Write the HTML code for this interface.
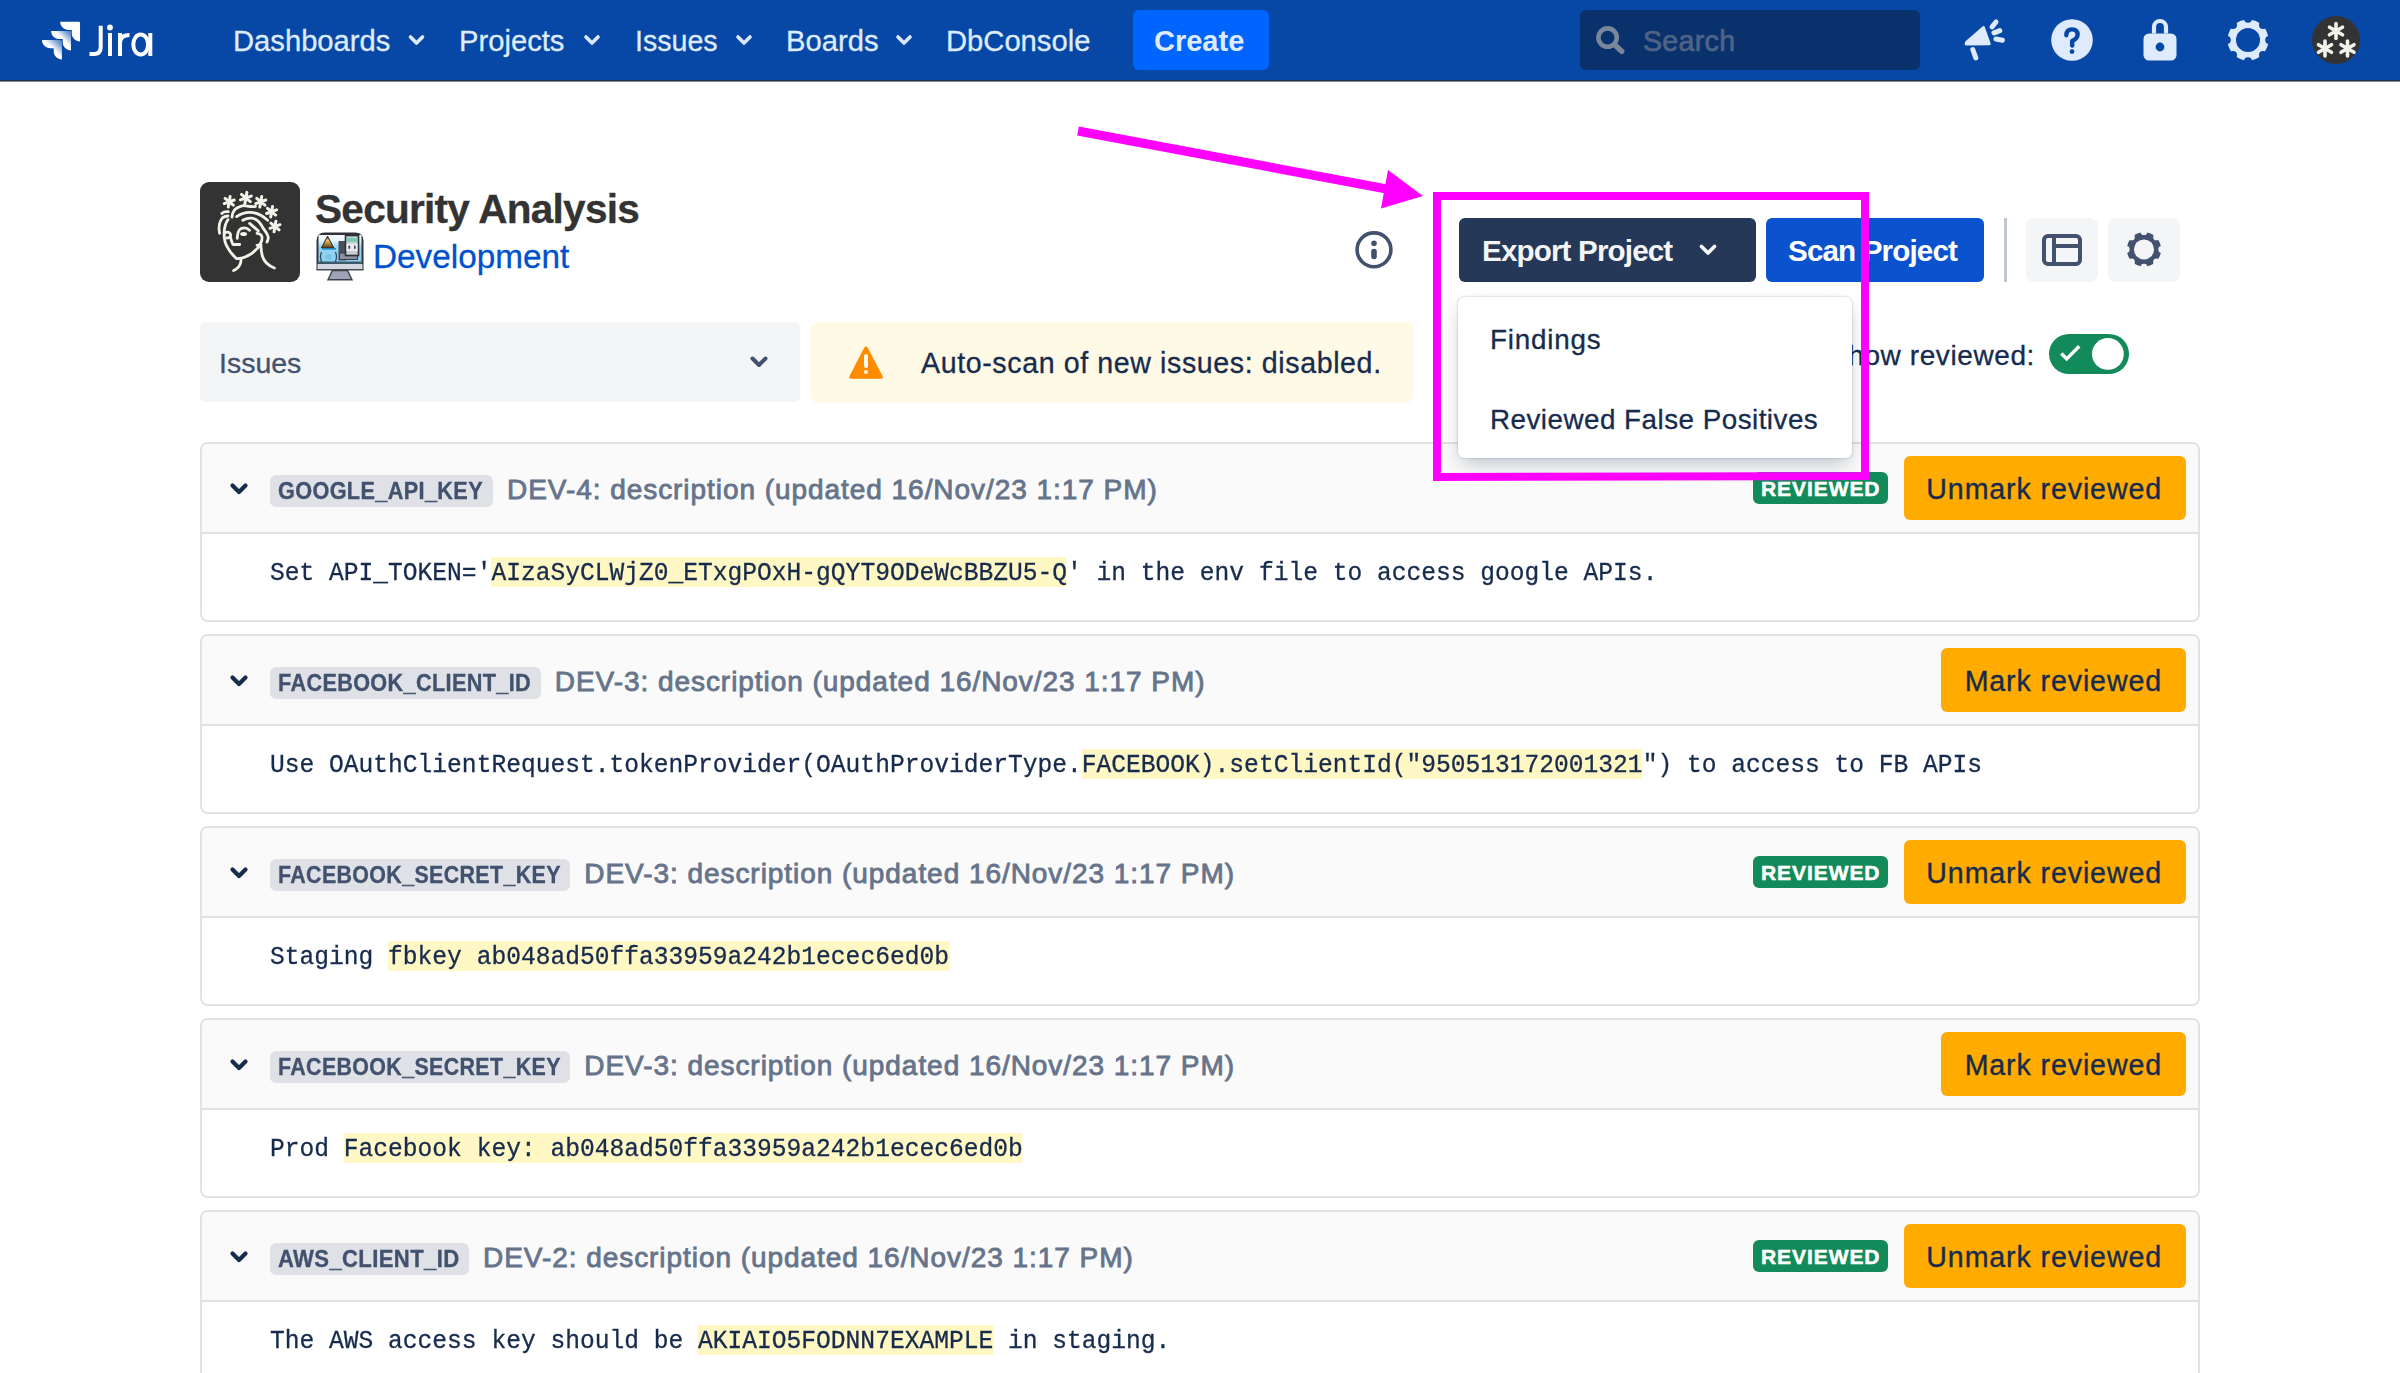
<!DOCTYPE html>
<html><head><meta charset="utf-8"><style>
*{box-sizing:border-box;margin:0;padding:0}
html,body{width:2400px;height:1373px;overflow:hidden;background:#fff;font-family:"Liberation Sans",sans-serif;-webkit-text-stroke-width:0.3px}
.a{position:absolute;white-space:pre}
svg{position:absolute;overflow:visible}
#hdr{position:absolute;left:0;top:0;width:2400px;height:80px;background:#0747A6}
#hdrline{position:absolute;left:0;top:80px;width:2400px;height:2px;background:linear-gradient(#23304a 50%,#7c8494 50%)}
.nav{color:#DEEBFF;font-size:29.2px;top:23px;line-height:36px}
.card{position:absolute;left:200px;width:2000px;height:180px;border:2px solid #E2E2E2;border-radius:8px;background:#fff;overflow:hidden}
.chd{position:absolute;left:0;top:0;width:100%;height:90px;background:#FAFAFA;border-bottom:2px solid #E2E2E2}
.rchev{left:27px;top:38px}
.tagrow{position:absolute;left:68px;top:29px;height:36px;white-space:pre;display:flex;align-items:center}
.tag{-webkit-text-stroke-width:0;display:inline-block;position:relative;height:32px;background:#DFE1E6;border-radius:6px}
.tag i{-webkit-text-stroke:0.35px #42526E;position:absolute;left:7.6px;top:0;line-height:32px;font-style:normal;color:#42526E;font-weight:700;font-size:24px;letter-spacing:0.4px;transform-origin:0 50%;white-space:pre}
.ttl{-webkit-text-stroke:0.85px #66748B;display:inline-block;position:relative;top:-1px;margin-left:14px;color:#66748B;font-size:28px;font-weight:400;letter-spacing:0.95px;line-height:36px}
.badge{position:absolute;right:310px;top:28px;height:32px;line-height:33px;padding:0 7.6px 0 7.6px;-webkit-text-stroke:0.5px #fff;background:#138A5A;color:#fff;font-weight:700;font-size:21px;letter-spacing:0.92px;border-radius:6px}
.obtn{position:absolute;right:12px;top:12px;height:64px;line-height:64px;padding:0 24px;background:#FFAB00;color:#172B4D;border-radius:6px;font-size:28.6px;letter-spacing:0.88px;white-space:pre;-webkit-text-stroke:0.35px #172B4D;padding-top:1px}
.code{position:absolute;left:68px;top:113px;height:34px;line-height:34px;font-family:"Liberation Mono",monospace;font-size:25.6px;color:#172B4D;white-space:pre;transform:scaleX(0.96097);transform-origin:0 0}
.hl{background:#FFF7C4;display:inline-block;line-height:26px;padding-top:4px}
.unm{padding-left:22.3px}

</style></head><body>
<div id="hdr"></div><div id="hdrline"></div>
<!-- jira logo -->
<svg width="2400" height="82" style="left:0;top:0">
 <defs>
  <linearGradient id="jg1" x1="98%" y1="0%" x2="58%" y2="40%"><stop offset="0.18" stop-color="#DEEBFF" stop-opacity="0.4"/><stop offset="1" stop-color="#fff"/></linearGradient>
  <linearGradient id="jg2" x1="100%" y1="0%" x2="55%" y2="45%"><stop offset="0.18" stop-color="#DEEBFF" stop-opacity="0.4"/><stop offset="1" stop-color="#fff"/></linearGradient>
 </defs>
 <g transform="translate(40,19.04) scale(1.33)">
  <path fill="#fff" d="M29,2H15.2c0,3.4,2.8,6.2,6.2,6.2h2.5v2.4c0,3.4,2.8,6.2,6.2,6.2V3C30.1,2.4,29.6,2,29,2z"/>
  <path fill="url(#jg1)" d="M22.2,8.9H8.4c0,3.4,2.8,6.2,6.2,6.2h2.5v2.4c0,3.4,2.8,6.2,6.2,6.2V9.9C23.3,9.3,22.8,8.9,22.2,8.9z"/>
  <path fill="url(#jg2)" d="M15.3,15.7H1.5c0,3.4,2.8,6.2,6.2,6.2h2.6v2.4c0,3.4,2.8,6.2,6.2,6.2V16.8C16.4,16.2,15.9,15.7,15.3,15.7z"/>
 </g>

 <!-- Jira wordmark -->
 <g fill="none" stroke="#fff" stroke-width="4">
  <path d="M100.7,25.7 V47 Q100.7,54 94,54 H89.5"/>
  <path d="M110,33 V56"/>
  <path d="M120,33 V56 M120,43 Q120,35 129.5,35"/>
  <ellipse cx="140.7" cy="44.5" rx="7.4" ry="10"/>
  <path d="M150.3,33 V56"/>
 </g>
 <circle cx="110" cy="27.5" r="2.9" fill="#fff"/>
 <!-- nav chevrons -->
 <g fill="none" stroke="#DEEBFF" stroke-width="3.6" stroke-linecap="round" stroke-linejoin="round">
  <path d="M410.5,37 L416.5,43 L422.5,37"/>
  <path d="M586,37 L592,43 L598,37"/>
  <path d="M738,37 L744,43 L750,37"/>
  <path d="M898,37 L904,43 L910,37"/>
 </g>
 <!-- megaphone -->
 <g fill="#DEEBFF">
  <path d="M1965.5,41.2 L1982.5,26.5 Q1984.2,25.2 1984.9,27.2 L1990.6,43.2 Q1991.2,45.2 1989.2,45.2 L1966.6,45.5 Q1963.3,45.2 1965.5,41.2Z"/>
 </g>
 <g fill="none" stroke="#DEEBFF" stroke-width="5" stroke-linecap="round">
  <path d="M1972.8,49.5 L1975.8,57.8"/>
  <path d="M1992,26.8 L1996,22"/>
  <path d="M1994,32.9 L1999.8,30.6"/>
  <path d="M1996,39 L2002.4,40.2"/>
 </g>
 <!-- help -->
 <circle cx="2072" cy="40" r="20.8" fill="#DEEBFF"/>
 <path d="M2066.3,35.2 Q2066.5,29.4 2072,29.4 Q2077.6,29.4 2077.6,34.8 Q2077.6,38.4 2072.2,41 L2072.2,45.5" fill="none" stroke="#0747A6" stroke-width="4.4" stroke-linecap="round" stroke-linejoin="round"/>
 <circle cx="2072" cy="51.6" r="2.4" fill="#0747A6"/>
 <!-- lock -->
 <path d="M2154,33.5 V27 A6,6 0 0 1 2166,27 V33.5" fill="none" stroke="#DEEBFF" stroke-width="4.2"/>
 <rect x="2143.5" y="33.5" width="33" height="27" rx="5.5" fill="#DEEBFF"/>
 <circle cx="2160" cy="47" r="4.4" fill="#0747A6"/>
 <!-- gear -->
 <mask id="gm1" maskUnits="userSpaceOnUse" x="2218" y="10" width="60" height="60"><rect x="2218" y="10" width="60" height="60" fill="#fff"/><circle cx="2269.20" cy="40.00" r="4.00" fill="#000"/><circle cx="2262.99" cy="25.01" r="4.00" fill="#000"/><circle cx="2248.00" cy="18.80" r="4.00" fill="#000"/><circle cx="2233.01" cy="25.01" r="4.00" fill="#000"/><circle cx="2226.80" cy="40.00" r="4.00" fill="#000"/><circle cx="2233.01" cy="54.99" r="4.00" fill="#000"/><circle cx="2248.00" cy="61.20" r="4.00" fill="#000"/><circle cx="2262.99" cy="54.99" r="4.00" fill="#000"/><circle cx="2248.00" cy="40.00" r="12.00" fill="#000"/></mask><circle cx="2248.00" cy="40.00" r="20.50" fill="#DEEBFF" mask="url(#gm1)"/>
 <!-- avatar -->
 <circle cx="2336" cy="40" r="24" fill="#333"/>
 <g stroke="#F3F2EA" stroke-width="3.6" stroke-linecap="round">
  <path d="M2336,23.5 V38.5 M2329.5,27.2 L2342.5,34.8 M2329.5,34.8 L2342.5,27.2"/>
  <path d="M2325,41 V56 M2318.5,44.7 L2331.5,52.3 M2318.5,52.3 L2331.5,44.7"/>
  <path d="M2347.5,41 V56 M2341,44.7 L2354,52.3 M2341,52.3 L2354,44.7"/>
 </g>
</svg>
<div class="a nav" style="left:233px">Dashboards</div>
<div class="a nav" style="left:459px">Projects</div>
<div class="a nav" style="left:635px;font-size:28.6px">Issues</div>
<div class="a nav" style="left:786px">Boards</div>
<div class="a nav" style="left:946px">DbConsole</div>

<div class="a" style="left:1133px;top:10px;width:136px;height:60px;background:#0065FF;border-radius:6px"></div>
<div class="a" style="left:1154px;top:23px;font-size:29px;line-height:36px;font-weight:700;color:#DEEBFF;-webkit-text-stroke-width:0">Create</div>

<div class="a" style="left:1580px;top:10px;width:340px;height:60px;background:#09326C;border-radius:6px"></div>
<svg width="40" height="40" style="left:1590px;top:20px"><circle cx="17.6" cy="17.6" r="9.2" fill="none" stroke="#7A869A" stroke-width="4.6"/><path d="M26.2,26.2 L31.7,31.3" stroke="#7A869A" stroke-width="5.4" stroke-linecap="round"/></svg>
<div class="a" style="left:1643px;top:23px;font-size:28.6px;letter-spacing:0.3px;line-height:36px;color:#4F6287;-webkit-text-stroke:0.7px #4F6287">Search</div>

<!-- project header -->
<svg width="100" height="100" style="left:200px;top:182px">
 <rect width="100" height="100" rx="9" fill="#333"/>
 <g fill="none" stroke="#F4F3EA" stroke-linecap="round" stroke-linejoin="round">
  <path stroke-width="3" d="M28.28,25.02 L30.12,14.58 M24.22,21.61 L34.18,17.99 M25.14,16.39 L33.26,23.21 M44.91,21.61 L46.89,10.39 M40.54,17.95 L51.26,14.05 M41.53,12.34 L50.27,19.66 M59.88,25.02 L61.72,14.58 M55.82,21.61 L65.78,17.99 M56.74,16.39 L64.86,23.21 M70.68,34.92 L72.52,24.48 M66.62,31.51 L76.58,27.89 M67.54,26.29 L75.66,33.11 M74.08,49.72 L75.92,39.28 M70.02,46.31 L79.98,42.69 M70.94,41.09 L79.06,47.91 "/>
  <g stroke-width="2.8">
  <path d="M32,35.2 C32.5,30 34,26 42.2,23.8 C46,23.2 50,25.5 55.5,24.4"/>
  <path d="M21.8,31.5 C23.5,29.8 26,29.4 28.3,29.7"/>
  <path d="M19.6,51.3 C18.5,46 18.2,41 22.4,35.9 C24,34.7 26,34 28,34"/>
  <path d="M36.6,34.6 C41,31.5 45,30.2 50,30.3 C57,30.5 63,34 67.6,38.3"/>
  <path d="M42.8,38.3 C46,36.5 49,35.8 52,36.2 C56,36.8 60,40 62.6,45.2 C64.5,48.5 67.5,51 68.2,55 C68.5,57 67.8,58.5 67,60"/>
  <path d="M28,37.7 C25.5,41 24.5,45 24.2,50 C23.9,56 24.8,61 27.3,65 C29.5,69.5 32,72.5 36.6,76.7 C42,76.8 47,74.5 52.1,71.2 C55.5,68.5 58.5,65.5 60.8,62.5"/>
  <path d="M57,63.3 L60.8,62.5"/>
  <path d="M41,76.7 C41.2,80 40.5,83 38,85.5 C36.5,87 35,88 33.5,88.5"/>
  <path d="M60.8,62.5 C61,67 61.5,71 62.5,74.5 C64,79 66.5,83 74.4,86"/>
  <path d="M57,51.3 C59.5,51.5 61.5,52.5 62,55 C62.4,57.5 61.5,60 60.2,61.9"/>
  <path d="M49.6,41.4 L58.3,48.9"/>
  <path d="M37.2,56.3 C37.5,51 38.5,47.5 41.5,46.3 C44.5,45.3 47.5,46 49.6,48.2"/>
  <path d="M25.5,50.5 C27.5,49.8 30,50 30.6,52.5 C31,54.5 29.5,56 27,56"/>
  <path d="M30.4,55 C31,58 32,60.5 32.9,62.5 L39.7,62.5"/>
  </g>
 </g>
 <ellipse cx="43.6" cy="52" rx="3.4" ry="2" fill="#F4F3EA"/>
</svg>
<div class="a" style="left:315px;top:187px;font-size:40.6px;letter-spacing:-0.75px;line-height:44px;font-weight:700;color:#333;-webkit-text-stroke:0.3px #333">Security Analysis</div>

<!-- dev icon -->
<svg width="48" height="48" style="left:316px;top:232px">
 <defs><linearGradient id="scr" x1="0" y1="0" x2="0" y2="1"><stop offset="0" stop-color="#F4F9FD"/><stop offset="0.18" stop-color="#EAF5FB"/><stop offset="0.45" stop-color="#92D3F2"/><stop offset="1" stop-color="#8CD2F3"/></linearGradient>
 <linearGradient id="cone" x1="0" y1="0" x2="0" y2="1"><stop offset="0" stop-color="#3b2a10"/><stop offset="0.35" stop-color="#F2C46A"/><stop offset="1" stop-color="#5a3d10"/></linearGradient></defs>
 <path d="M0.5,38 V9 Q0.5,0.5 9,0.5 H39 Q47.5,0.5 47.5,9 V38Z" fill="#2F3338"/>
 <rect x="2.5" y="3" width="43" height="28.5" fill="url(#scr)"/>
 <rect x="2.5" y="29.5" width="43" height="2.5" fill="#3D5A68"/>
 <path d="M5.5,15.8 L11.5,4.2 L17.8,15.8Z" fill="url(#cone)" stroke="#2a2210" stroke-width="1"/>
 <rect x="6" y="16" width="14" height="1.6" fill="#1E88C6"/>
 <path d="M5.6,20 Q3.4,24.5 5.6,30 M19.4,20 Q21.6,24.5 19.4,30" stroke="#2d4f63" stroke-width="1.3" fill="none"/>
 <circle cx="12.5" cy="25" r="3" fill="#7fc3e3"/>
 <path d="M22.5,9 H30 V28.5 H22.5Z" fill="#4a4f5a"/>
 <rect x="23.5" y="21" width="18" height="6.5" fill="#8b90a0" stroke="#3a3d44" stroke-width="1"/>
 <rect x="29.5" y="3.5" width="13" height="20" fill="#C7CCD4" stroke="#2e3136" stroke-width="1.6"/>
 <rect x="30.5" y="6.2" width="11" height="3.3" fill="#6FCCA8"/>
 <rect x="30.5" y="11.5" width="11" height="7.5" fill="#E8E9EE"/>
 <rect x="32.5" y="13.5" width="1.6" height="3.5" rx="0.8" fill="#444"/>
 <rect x="38" y="13.5" width="1.6" height="3.5" rx="0.8" fill="#444"/>
 <rect x="1.5" y="32" width="45" height="5" fill="#D3D6E0"/>
 <rect x="0.5" y="37" width="47" height="1.5" fill="#4a4d55"/>
 <path d="M16.4,38.5 H31.5 L36,47.8 H12Z" fill="#9DA3B6" stroke="#3d4047" stroke-width="1.4"/>
</svg>
<div class="a" style="left:373px;top:238px;font-size:33.3px;line-height:38px;color:#0052CC">Development</div>

<!-- info icon -->
<svg width="40" height="40" style="left:1354px;top:230px">
 <circle cx="20" cy="19.8" r="16.9" fill="none" stroke="#42526E" stroke-width="3.6"/>
 <circle cx="20" cy="13.2" r="2.8" fill="#42526E"/>
 <path d="M20,21.5 V26.5" stroke="#42526E" stroke-width="5.6" stroke-linecap="round"/>
</svg>

<!-- select -->
<div class="a" style="left:200px;top:322px;width:600px;height:80px;background:#F4F5F7;border-radius:6px"></div>
<div class="a" style="left:219px;top:345px;font-size:28.5px;line-height:36px;color:#42526E">Issues</div>
<svg width="30" height="20" style="left:745px;top:352px"><path d="M7.5,6.5 L14,13 L20.5,6.5" fill="none" stroke="#42526E" stroke-width="4" stroke-linecap="round" stroke-linejoin="round"/></svg>

<!-- warning -->
<div class="a" style="left:810px;top:322px;width:604px;height:80px;background:#FFFAE6;border-radius:6px"></div>
<svg width="40" height="40" style="left:846px;top:342px">
 <path d="M18.2,5.8 Q20,3 21.8,5.8 L36.5,34 Q37.6,36.7 34.8,36.7 H5.2 Q2.4,36.7 3.5,34Z" fill="#FF8B00"/>
 <path d="M20,14 V24" stroke="#FFFAE6" stroke-width="4" stroke-linecap="round"/>
 <circle cx="20" cy="30" r="2.1" fill="#FFFAE6"/>
</svg>
<div class="a" style="left:921px;top:345px;font-size:28.6px;letter-spacing:0.6px;line-height:36px;color:#172B4D">Auto-scan of new issues: disabled.</div>

<!-- action buttons -->
<div class="a" style="left:1459px;top:218px;width:297px;height:64px;background:#253858;border-radius:6px"></div>
<div class="a" style="left:1482px;top:233px;font-size:29.6px;letter-spacing:-0.85px;line-height:36px;font-weight:700;color:#F4F5F7;-webkit-text-stroke-width:0">Export Project</div>
<svg width="30" height="20" style="left:1694px;top:241px"><path d="M7.5,5.5 L14,12 L20.5,5.5" fill="none" stroke="#F4F5F7" stroke-width="3.8" stroke-linecap="round" stroke-linejoin="round"/></svg>
<div class="a" style="left:1766px;top:218px;width:218px;height:64px;background:#0B52CF;border-radius:6px"></div>
<div class="a" style="left:1788px;top:233px;font-size:29.6px;letter-spacing:-0.85px;line-height:36px;font-weight:700;color:#fff;-webkit-text-stroke-width:0">Scan Project</div>
<div class="a" style="left:2004px;top:218px;width:3px;height:64px;background:#C1C7D0"></div>
<div class="a" style="left:2026px;top:218px;width:72px;height:64px;background:#F4F5F7;border-radius:8px"></div>
<svg width="50" height="40" style="left:2040px;top:232px">
 <rect x="4" y="4" width="36" height="28" rx="4" fill="none" stroke="#42526E" stroke-width="4"/>
 <path d="M14,4 V32 M14,14 H40" stroke="#42526E" stroke-width="4"/>
</svg>
<div class="a" style="left:2108px;top:218px;width:72px;height:64px;background:#F4F5F7;border-radius:8px"></div>
<svg width="2400" height="300" style="left:0;top:0"><mask id="gm2" maskUnits="userSpaceOnUse" x="2114" y="219" width="60" height="60"><rect x="2114" y="219" width="60" height="60" fill="#fff"/><circle cx="2161.68" cy="249.40" r="3.34" fill="#000"/><circle cx="2156.50" cy="236.90" r="3.34" fill="#000"/><circle cx="2144.00" cy="231.72" r="3.34" fill="#000"/><circle cx="2131.50" cy="236.90" r="3.34" fill="#000"/><circle cx="2126.32" cy="249.40" r="3.34" fill="#000"/><circle cx="2131.50" cy="261.90" r="3.34" fill="#000"/><circle cx="2144.00" cy="267.08" r="3.34" fill="#000"/><circle cx="2156.50" cy="261.90" r="3.34" fill="#000"/><circle cx="2144.00" cy="249.40" r="10.01" fill="#000"/></mask><circle cx="2144.00" cy="249.40" r="17.10" fill="#42526E" mask="url(#gm2)"/></svg>

<!-- show reviewed + toggle -->
<div class="a" style="right:365px;top:338px;font-size:28px;letter-spacing:0.6px;line-height:36px;color:#172B4D">Show reviewed:</div>
<div class="a" style="left:2049px;top:334px;width:80px;height:40px;background:#138A5A;border-radius:20px"></div>
<svg width="100" height="60" style="left:2040px;top:326px">
 <path d="M21.3,27.5 L26.7,32.9 L39.2,20.2" fill="none" stroke="#fff" stroke-width="3.4"/>
 <circle cx="67.9" cy="27.9" r="15.9" fill="#fff"/>
</svg>

<div class="card" style="top:442px"><div class="chd"></div><svg class="rchev" width="20" height="14" viewBox="0 0 20 14"><path d="M3.5,3.5 L10,10 L16.5,3.5" fill="none" stroke="#172B4D" stroke-width="4.2" stroke-linecap="round" stroke-linejoin="round"/></svg><div class="tagrow"><span class="tag" style="width:223px"><i style="transform:scaleX(0.903)">GOOGLE_API_KEY</i></span><span class="ttl">DEV-4: description (updated 16/Nov/23 1:17 PM)</span></div><div class="badge">REVIEWED</div><div class="obtn unm">Unmark reviewed</div><div class="code">Set API_TOKEN='<span class="hl">AIzaSyCLWjZ0_ETxgPOxH-gQYT9ODeWcBBZU5-Q</span>' in the env file to access google APIs.</div></div><div class="card" style="top:634px"><div class="chd"></div><svg class="rchev" width="20" height="14" viewBox="0 0 20 14"><path d="M3.5,3.5 L10,10 L16.5,3.5" fill="none" stroke="#172B4D" stroke-width="4.2" stroke-linecap="round" stroke-linejoin="round"/></svg><div class="tagrow"><span class="tag" style="width:270.8px"><i style="transform:scaleX(0.902)">FACEBOOK_CLIENT_ID</i></span><span class="ttl">DEV-3: description (updated 16/Nov/23 1:17 PM)</span></div><div class="obtn mrk">Mark reviewed</div><div class="code">Use OAuthClientRequest.tokenProvider(OAuthProviderType.<span class="hl">FACEBOOK).setClientId("950513172001321</span>") to access to FB APIs</div></div><div class="card" style="top:826px"><div class="chd"></div><svg class="rchev" width="20" height="14" viewBox="0 0 20 14"><path d="M3.5,3.5 L10,10 L16.5,3.5" fill="none" stroke="#172B4D" stroke-width="4.2" stroke-linecap="round" stroke-linejoin="round"/></svg><div class="tagrow"><span class="tag" style="width:300.3px"><i style="transform:scaleX(0.892)">FACEBOOK_SECRET_KEY</i></span><span class="ttl">DEV-3: description (updated 16/Nov/23 1:17 PM)</span></div><div class="badge">REVIEWED</div><div class="obtn unm">Unmark reviewed</div><div class="code">Staging <span class="hl">fbkey ab048ad50ffa33959a242b1ecec6ed0b</span></div></div><div class="card" style="top:1018px"><div class="chd"></div><svg class="rchev" width="20" height="14" viewBox="0 0 20 14"><path d="M3.5,3.5 L10,10 L16.5,3.5" fill="none" stroke="#172B4D" stroke-width="4.2" stroke-linecap="round" stroke-linejoin="round"/></svg><div class="tagrow"><span class="tag" style="width:300.3px"><i style="transform:scaleX(0.892)">FACEBOOK_SECRET_KEY</i></span><span class="ttl">DEV-3: description (updated 16/Nov/23 1:17 PM)</span></div><div class="obtn mrk">Mark reviewed</div><div class="code">Prod <span class="hl">Facebook key: ab048ad50ffa33959a242b1ecec6ed0b</span></div></div><div class="card" style="top:1210px"><div class="chd"></div><svg class="rchev" width="20" height="14" viewBox="0 0 20 14"><path d="M3.5,3.5 L10,10 L16.5,3.5" fill="none" stroke="#172B4D" stroke-width="4.2" stroke-linecap="round" stroke-linejoin="round"/></svg><div class="tagrow"><span class="tag" style="width:199px"><i style="transform:scaleX(0.92)">AWS_CLIENT_ID</i></span><span class="ttl">DEV-2: description (updated 16/Nov/23 1:17 PM)</span></div><div class="badge">REVIEWED</div><div class="obtn unm">Unmark reviewed</div><div class="code">The AWS access key should be <span class="hl">AKIAIO5FODNN7EXAMPLE</span> in staging.</div></div>
<!-- dropdown -->
<div class="a" style="left:1458px;top:297px;width:394px;height:161px;background:#fff;border-radius:6px;box-shadow:0 8px 20px -4px rgba(9,30,66,0.28),0 0 2px rgba(9,30,66,0.31)"></div>
<div class="a" style="left:1490px;top:322px;font-size:27.8px;letter-spacing:0.8px;line-height:36px;color:#172B4D">Findings</div>
<div class="a" style="left:1490px;top:402px;font-size:27.8px;letter-spacing:0.48px;line-height:36px;color:#172B4D">Reviewed False Positives</div>
<!-- magenta annotations -->
<svg width="2400" height="1373" style="left:0;top:0">
 <path d="M1437,196 H1865 V476 L1437,477Z" fill="none" stroke="#FF00FF" stroke-width="8" stroke-linejoin="miter"/>
 <path d="M1078,131 L1392,190" stroke="#FF00FF" stroke-width="9"/>
 <path d="M1388,170 L1423,196 L1381,208.5Z" fill="#FF00FF"/>
</svg>

</body></html>
